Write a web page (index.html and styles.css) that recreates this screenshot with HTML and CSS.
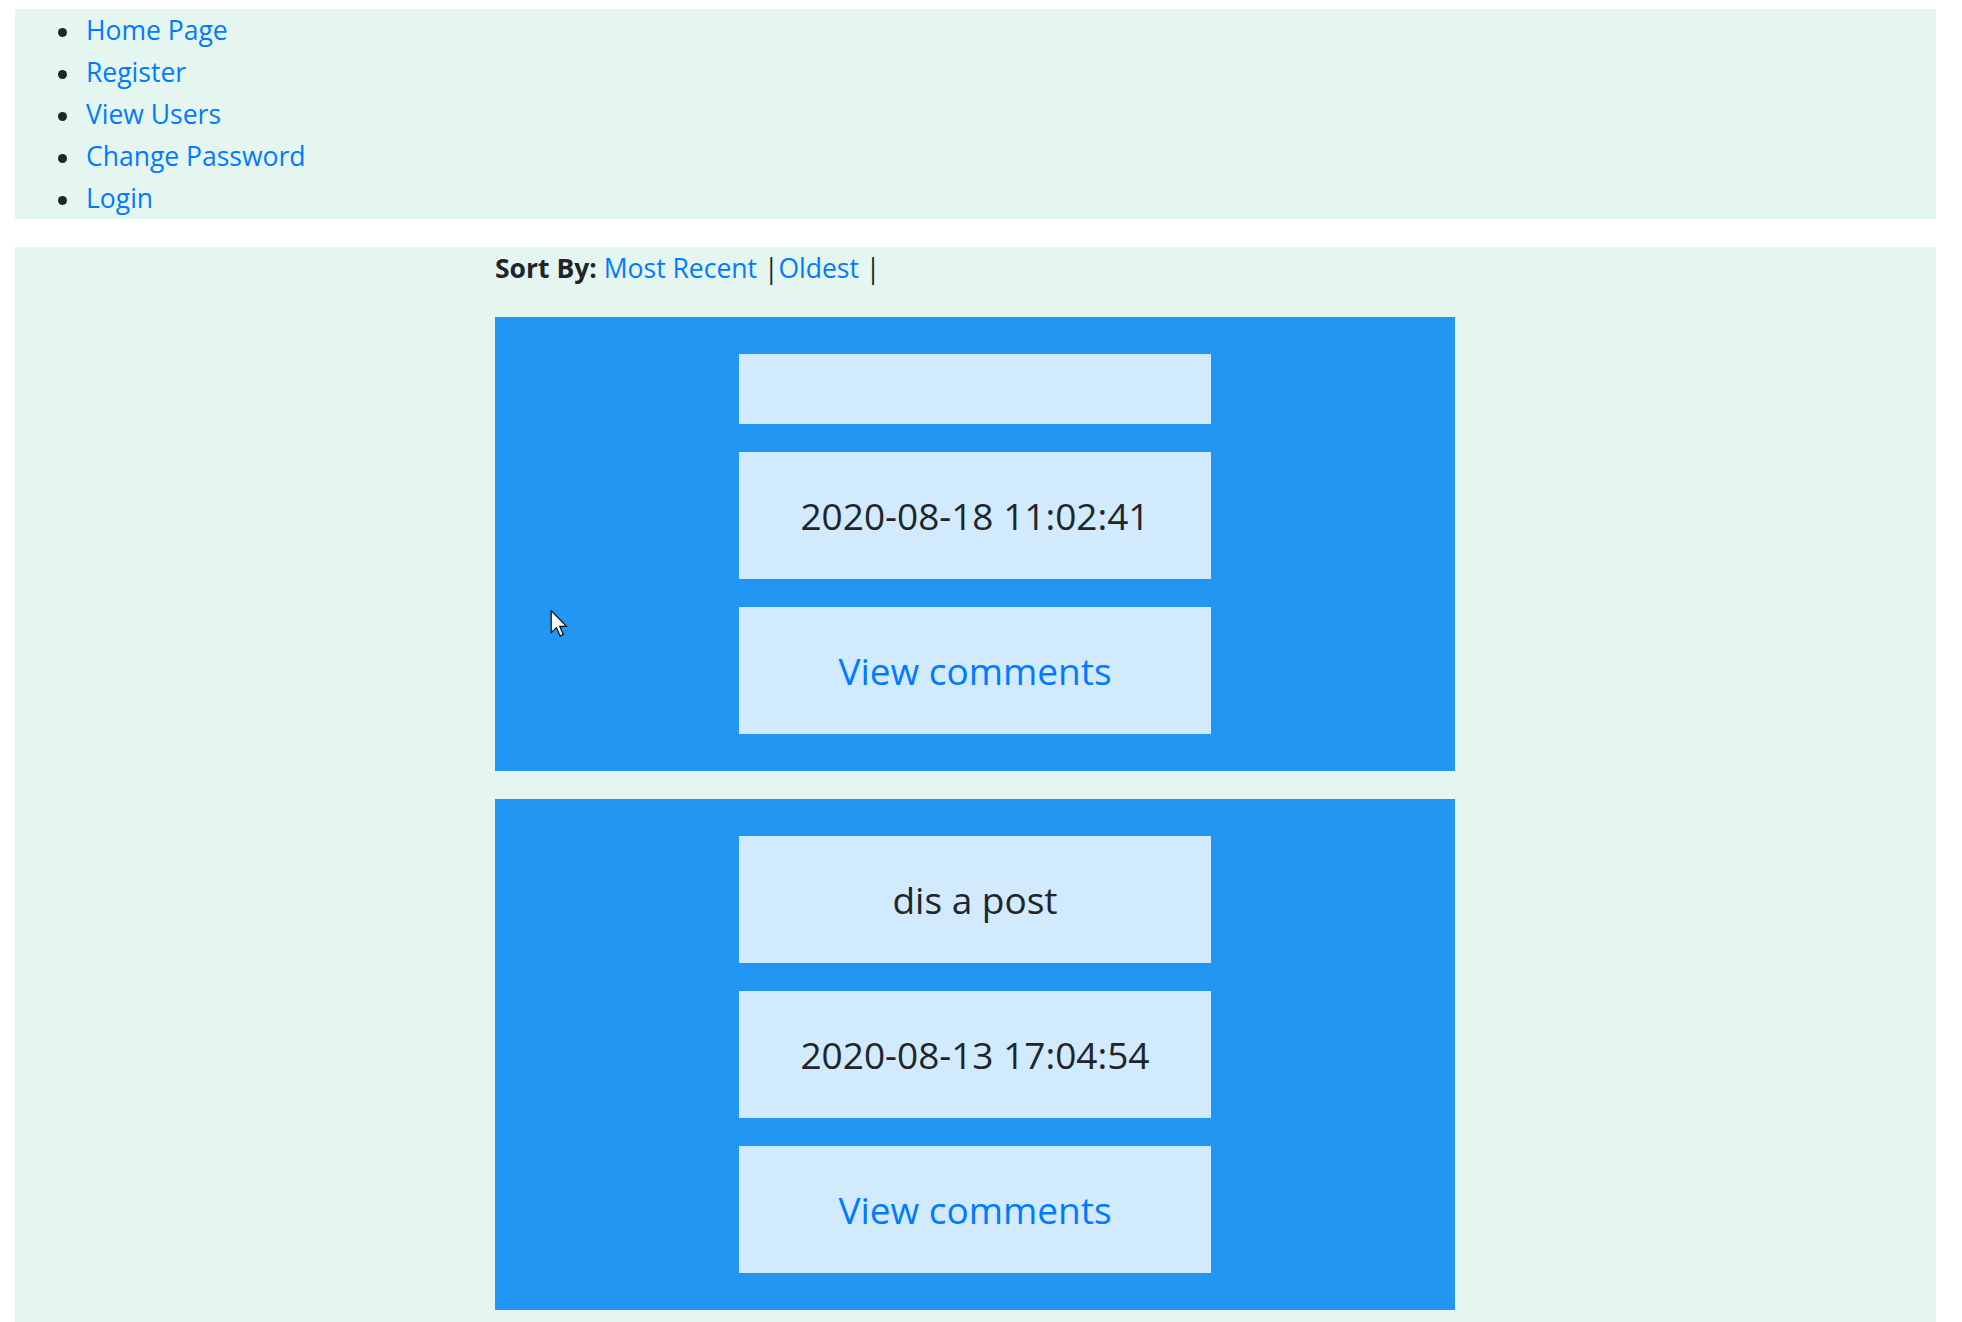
FILE: index.html
```html
<!DOCTYPE html>
<html lang="en">
<head>
<meta charset="utf-8">
<title>Posts</title>
<link rel="stylesheet" href="styles.css">
</head>
<body>
<nav class="nav">
  <ul class="nav-list">
    <li><a href="#">Home Page</a></li>
    <li><a href="#">Register</a></li>
    <li><a href="#">View Users</a></li>
    <li><a href="#">Change Password</a></li>
    <li><a href="#">Login</a></li>
  </ul>
</nav>
<main class="main">
  <div class="column">
    <div class="sort"><b>Sort By:</b> <a href="#">Most Recent</a> |<a href="#">Oldest</a> |</div>
    <div class="post">
      <div class="box"></div>
      <div class="box">2020-08-18 11:02:41</div>
      <div class="box"><a href="#">View comments</a></div>
    </div>
    <div class="post">
      <div class="box">dis a post</div>
      <div class="box">2020-08-13 17:04:54</div>
      <div class="box"><a href="#">View comments</a></div>
    </div>
  </div>
</main>
<svg class="cursor" width="18" height="27" viewBox="0 0 12 19"><path d="M0.5 0.5 L0.5 16 L4.2 12.4 L6.8 18.3 L9 17.3 L6.5 11.5 L11.3 11.5 Z" fill="#fff" stroke="#000" stroke-width="0.8" stroke-linejoin="miter"/></svg>
</body>
</html>
```
FILE: styles.css
```css
html, body {
  margin: 0;
  background: #ffffff;
  overflow: hidden;
}
body {
  padding: 9px 26px 0 15px;
  font-family: "Open Sans", "Noto Sans", sans-serif;
  font-size: 26.5px;
  line-height: 42px;
  color: #212529;
  height: 1322px;
  box-sizing: border-box;
}
a {
  color: #007bff;
  text-decoration: none;
}
.nav {
  background: #e5f6f0;
}
.nav-list {
  margin: 0;
  padding: 0 0 0 71px;
  list-style: none;
}
.nav-list li::before {
  content: "";
  display: inline-block;
  width: 9px;
  height: 9px;
  border-radius: 50%;
  background: #212529;
  margin-left: -28px;
  margin-right: 19px;
  vertical-align: 3.5px;
}
.main {
  margin-top: 28px;
  background: #e5f6f0;
  padding-left: 480px;
  height: 1075px;
}
.column {
  width: 960px;
}
.sort {
  margin-bottom: 28px;
}
.post {
  background: #2196f3;
  padding: 37px 0;
  margin-bottom: 28px;
  display: flex;
  flex-direction: column;
  align-items: center;
  gap: 28px;
}
.box {
  width: 472px;
  box-sizing: border-box;
  padding: 35px 0;
  min-height: 70px;
  background: rgba(255, 255, 255, 0.8);
  text-align: center;
  font-size: 37px;
  line-height: 57px;
}
.box:empty {
  padding: 0;
}
.cursor {
  position: absolute;
  left: 550px;
  top: 610px;
}
```
